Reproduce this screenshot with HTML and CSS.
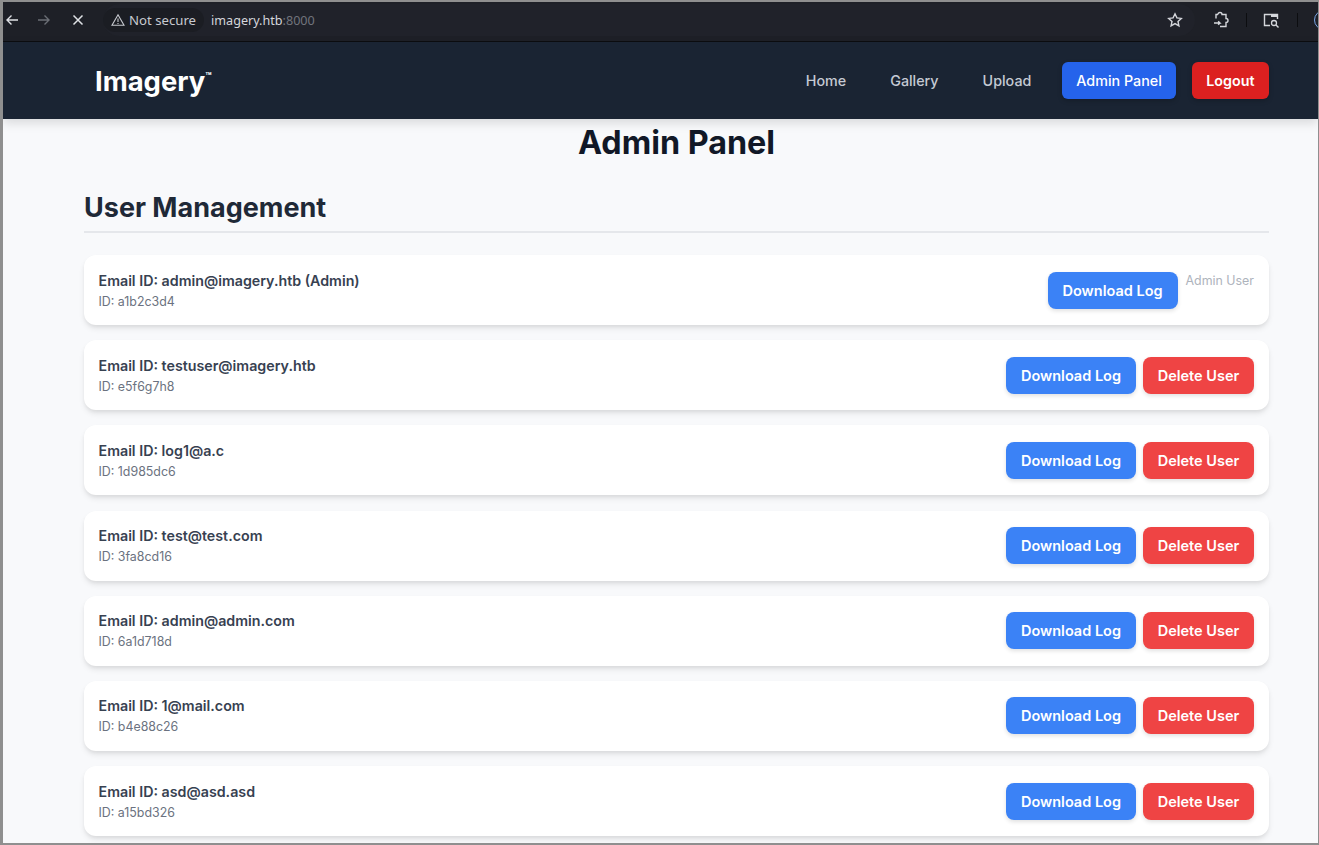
FILE: index.html
```html
<!DOCTYPE html>
<html lang="en">
<head>
<meta charset="utf-8">
<title>Imagery</title>
<link rel="stylesheet" href="styles.css">
</head>
<body>
<div class="frame">
  <div class="toolbar">
    <svg class="tool-icon" width="16" height="16" viewBox="0 0 16 16"><path d="M14 8H3M7.500 3.500 3 8l4.500 4.500" fill="none" stroke="#dfe1e5" stroke-width="1.400"/></svg>
    <svg class="tool-icon fwd" width="16" height="16" viewBox="0 0 16 16"><path d="M2 8h11M8.500 3.500 13 8l-4.500 4.500" fill="none" stroke="#6b6e75" stroke-width="1.400"/></svg>
    <svg class="tool-icon stop" width="16" height="16" viewBox="0 0 16 16"><path d="M3.500 3.500l9 9M12.500 3.500l-9 9" fill="none" stroke="#dfe1e5" stroke-width="1.500"/></svg>
    <div class="omnibox">
      <div class="secure">
        <svg width="14" height="14" viewBox="0 0 14 14"><path d="M7 1.800 13 12.200H1zM7 5.500v3.500M7 10v1" fill="none" stroke="#c8cad0" stroke-width="1.100"/></svg>
        <span>Not secure</span>
      </div>
      <span class="url">imagery.htb<span class="port">:8000</span></span>
      <svg class="star" width="16" height="16" viewBox="0 0 16 16"><path d="M8 1.800l1.900 4.100 4.400.5-3.300 3 .9 4.400L8 11.600l-3.900 2.200.9-4.400-3.300-3 4.400-.5z" fill="none" stroke="#d5d7dc" stroke-width="1.400"/></svg>
    </div>
    <svg class="ext" width="18" height="18" viewBox="0 0 18 18"><path d="M6 3.500a2 2 0 0 1 4 0h4v4a2 2 0 0 1 0 4v4H8M2 12h6l-1.800-1.800M8 12l-1.800 1.800M6 3.500H4v4" fill="none" stroke="#d5d7dc" stroke-width="1.400"/></svg>
    <span class="divider"></span>
    <svg class="lens" width="18" height="18" viewBox="0 0 18 18"><path d="M8 14.500H2.500v-11h13V8" fill="none" stroke="#d5d7dc" stroke-width="1.400"/><path d="M9 3.500h6.500V6H9z" fill="#d5d7dc"/><circle cx="12" cy="12" r="2.500" fill="none" stroke="#d5d7dc" stroke-width="1.300"/><path d="M14 14l2.500 2.500" stroke="#d5d7dc" stroke-width="1.400"/></svg>
    <span class="divider divider-last"></span>
    <span class="profile"></span>
  </div>

  <nav class="navbar">
    <a class="brand">Imagery<sup class="tm">™</sup></a>
    <div class="nav-links">
      <a class="nav-link">Home</a>
      <a class="nav-link">Gallery</a>
      <a class="nav-link">Upload</a>
      <a class="nav-btn nav-admin">Admin Panel</a>
      <a class="nav-btn nav-logout">Logout</a>
    </div>
  </nav>

  <main class="content">
    <h1 class="page-title">Admin Panel</h1>
    <h2 class="section-title">User Management</h2>
    <div class="user-list">
      <div class="user-card">
        <div class="user-info"><div class="user-email">Email ID: admin@imagery.htb (Admin)</div><div class="user-id">ID: a1b2c3d4</div></div>
        <div class="user-actions admin-actions"><button class="btn btn-blue">Download Log</button><span class="admin-note">Admin User</span></div>
      </div>
      <div class="user-card">
        <div class="user-info"><div class="user-email">Email ID: testuser@imagery.htb</div><div class="user-id">ID: e5f6g7h8</div></div>
        <div class="user-actions"><button class="btn btn-blue">Download Log</button><button class="btn btn-red">Delete User</button></div>
      </div>
      <div class="user-card">
        <div class="user-info"><div class="user-email">Email ID: log1@a.c</div><div class="user-id">ID: 1d985dc6</div></div>
        <div class="user-actions"><button class="btn btn-blue">Download Log</button><button class="btn btn-red">Delete User</button></div>
      </div>
      <div class="user-card">
        <div class="user-info"><div class="user-email">Email ID: test@test.com</div><div class="user-id">ID: 3fa8cd16</div></div>
        <div class="user-actions"><button class="btn btn-blue">Download Log</button><button class="btn btn-red">Delete User</button></div>
      </div>
      <div class="user-card">
        <div class="user-info"><div class="user-email">Email ID: admin@admin.com</div><div class="user-id">ID: 6a1d718d</div></div>
        <div class="user-actions"><button class="btn btn-blue">Download Log</button><button class="btn btn-red">Delete User</button></div>
      </div>
      <div class="user-card">
        <div class="user-info"><div class="user-email">Email ID: 1@mail.com</div><div class="user-id">ID: b4e88c26</div></div>
        <div class="user-actions"><button class="btn btn-blue">Download Log</button><button class="btn btn-red">Delete User</button></div>
      </div>
      <div class="user-card">
        <div class="user-info"><div class="user-email">Email ID: asd@asd.asd</div><div class="user-id">ID: a15bd326</div></div>
        <div class="user-actions"><button class="btn btn-blue">Download Log</button><button class="btn btn-red">Delete User</button></div>
      </div>
    </div>
  </main>
</div>
</body>
</html>
```
FILE: styles.css
```css
* { box-sizing: border-box; }
html, body { margin: 0; height: 100%; overflow: hidden; }
body { background: #8f8f8f; font-family: Inter, "Liberation Sans", sans-serif; }
.frame {
  height: 841px;
  margin: 2px 1px 0 3px;
  display: flex;
  flex-direction: column;
  overflow: hidden;
  background: #f8f9fb;
  position: relative;
}
.toolbar {
  height: 40px;
  flex: none;
  display: flex;
  align-items: center;
  background: #1e2027;
  border-bottom: 1px solid #0c0d10;
  padding: 0 0 3px 1px;
}
.tool-icon { flex: none; margin-right: 16px; }
.fwd { margin-right: 18px; }
.stop { margin-right: 17px; }
.omnibox {
  flex: 1;
  height: 32px;
  margin-right: 17px;
  display: flex;
  align-items: center;
  border-radius: 16px;
  background: #20222a;
}
.secure {
  display: flex;
  align-items: center;
  gap: 4px;
  height: 24px;
  padding: 0 8px;
  border-radius: 12px;
  background: #1b1d23;
  font-size: 13.200px;
  color: #c8cad0;
  font-family: "Noto Sans", sans-serif;
}
.url { margin-left: 7px; font-size: 12.600px; color: #d5d7dc; font-family: "Noto Sans", sans-serif; }
.port { color: #71747c; }
.star { margin-left: auto; margin-right: 12px; }
.ext { flex: none; margin-right: 16px; }
.divider { width: 1px; height: 14px; background: #0c0d10; flex: none; margin-right: 15px; }
.divider-last { margin-right: 16px; }
.lens { flex: none; margin-right: 17px; }
.profile { width: 20px; height: 20px; border: 1.500px solid #7ba7e6; border-radius: 50%; flex: none; margin-right: -16px; }

.navbar {
  height: 77px;
  flex: none;
  display: flex;
  align-items: center;
  justify-content: space-between;
  padding: 0 49px 0 92px;
  background: #1a2433;
  box-shadow: 0 4px 10px rgba(0, 0, 0, 0.13);
  position: relative;
  z-index: 2;
}
.brand { color: #fff; font-size: 27.400px; font-weight: 700; display: flex; }
.tm { font-size: 10px; line-height: 1; margin-top: 7px; }
.nav-links { display: flex; align-items: center; }
.nav-link { color: #c5cad3; font-size: 14.300px; font-weight: 500; margin-right: 44px; }
.nav-btn { color: #fff; font-size: 14.300px; font-weight: 500; height: 37px; display: flex; align-items: center; border-radius: 6px; padding: 0 14px; box-shadow: 0 2px 5px rgba(0, 0, 0, 0.2); }
.nav-admin { background: #2563eb; margin-left: -13px; }
.nav-logout { background: #dc2020; margin-left: 16px; font-weight: 600; padding: 0 14.500px; }

.content { flex: 1; padding: 0 49px 0 81px; overflow: hidden; }
.page-title { margin: 0; padding-top: 4px; text-align: center; font-size: 32.300px; line-height: 40px; font-weight: 700; color: #111827; }
.section-title { margin: 27px 0 22px; padding-bottom: 5px; border-bottom: 2px solid #e5e7eb; font-size: 27px; line-height: 36px; font-weight: 700; color: #1f2937; }
.user-list { display: flex; flex-direction: column; gap: 15.200px; }
.user-card {
  height: 70px;
  flex: none;
  display: flex;
  align-items: center;
  justify-content: space-between;
  padding: 0 15px 0 14.500px;
  background: #fff;
  border-radius: 12px;
  box-shadow: 0 4px 6px -1px rgba(0, 0, 0, 0.1), 0 2px 4px -1px rgba(0, 0, 0, 0.06);
}
.user-info { padding-top: 2px; }
.user-email { font-size: 14.250px; line-height: 20px; font-weight: 600; color: #374151; }
.user-id { margin-top: 1px; font-size: 12.400px; line-height: 20px; color: #6b7280; }
.user-actions { display: flex; gap: 7px; }
.admin-actions { align-items: flex-start; gap: 8px; }
.admin-note { margin-top: 1px; font-size: 12.400px; line-height: 16px; color: #aeb3bc; }
.btn {
  width: 130px;
  height: 37px;
  padding: 0;
  border: 0;
  border-radius: 8px;
  color: #fff;
  font-family: inherit;
  font-size: 14.500px;
  font-weight: 600;
  box-shadow: 0 2px 4px rgba(0, 0, 0, 0.12);
}
.btn-blue { background: #3b82f6; }
.btn-red { background: #ef4444; width: 111px; }
```
